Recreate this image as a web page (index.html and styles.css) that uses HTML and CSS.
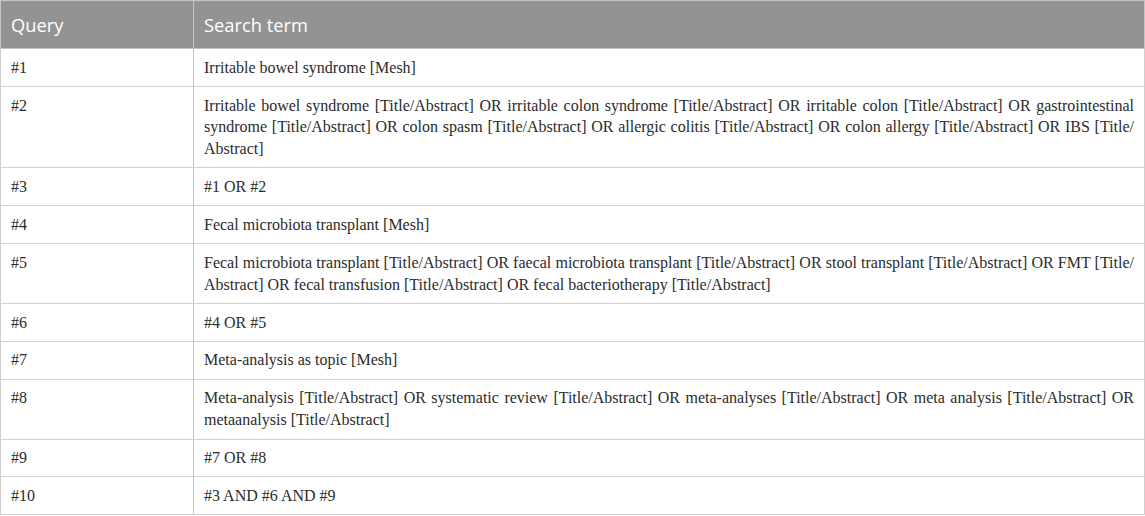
FILE: index.html
```html
<!DOCTYPE html>
<html>
<head>
<meta charset="utf-8">
<link rel="stylesheet" href="styles.css">
</head>
<body>
<table class="search-table">
  <colgroup>
    <col class="col-query">
    <col class="col-term">
  </colgroup>
  <thead>
    <tr><th>Query</th><th>Search term</th></tr>
  </thead>
  <tbody>
    <tr><td>#1</td><td>Irritable bowel syndrome [Mesh]</td></tr>
    <tr><td>#2</td><td>Irritable bowel syndrome [Title/<wbr>Abstract] OR irritable colon syndrome [Title/<wbr>Abstract] OR irritable colon [Title/<wbr>Abstract] OR gastrointestinal syndrome [Title/<wbr>Abstract] OR colon spasm [Title/<wbr>Abstract] OR allergic colitis [Title/<wbr>Abstract] OR colon allergy [Title/<wbr>Abstract] OR IBS [Title/<wbr>Abstract]</td></tr>
    <tr><td>#3</td><td>#1 OR #2</td></tr>
    <tr><td>#4</td><td>Fecal microbiota transplant [Mesh]</td></tr>
    <tr><td>#5</td><td>Fecal microbiota transplant [Title/<wbr>Abstract] OR faecal microbiota transplant [Title/<wbr>Abstract] OR stool transplant [Title/<wbr>Abstract] OR FMT [Title/<wbr>Abstract] OR fecal transfusion [Title/<wbr>Abstract] OR fecal bacteriotherapy [Title/<wbr>Abstract]</td></tr>
    <tr><td>#6</td><td>#4 OR #5</td></tr>
    <tr><td>#7</td><td>Meta-analysis as topic [Mesh]</td></tr>
    <tr><td>#8</td><td>Meta-analysis [Title/<wbr>Abstract] OR systematic review [Title/<wbr>Abstract] OR meta-analyses [Title/<wbr>Abstract] OR meta analysis [Title/<wbr>Abstract] OR metaanalysis [Title/<wbr>Abstract]</td></tr>
    <tr><td>#9</td><td>#7 OR #8</td></tr>
    <tr><td>#10</td><td>#3 AND #6 AND #9</td></tr>
  </tbody>
</table>
</body>
</html>
```

FILE: styles.css
```css
html, body {
  margin: 0;
  padding: 0;
  background: #ffffff;
}

.search-table {
  width: 1145px;
  border-collapse: collapse;
  table-layout: fixed;
  border: 1px solid #c4c4c4;
}

.col-query { width: 193px; }

.search-table th {
  background: #939393;
  color: #ffffff;
  font-family: "Open Sans", "Noto Sans", sans-serif;
  font-weight: 400;
  font-size: 18.3px;
  text-align: left;
  height: 48px;
  padding: 0 10px;
  border: 1px solid #c4c4c4;
  box-sizing: border-box;
}

.search-table td {
  font-family: "Liberation Serif", "Times New Roman", serif;
  font-size: 16px;
  line-height: 21.75px;
  color: #2b2b2b;
  padding: 7.6px 10px 7.6px 10px;
  border: 1px solid #cfcfcf;
  text-align: justify;
  vertical-align: top;
}

.search-table td:first-child {
  border-right-color: #c4c4c4;
}
```
